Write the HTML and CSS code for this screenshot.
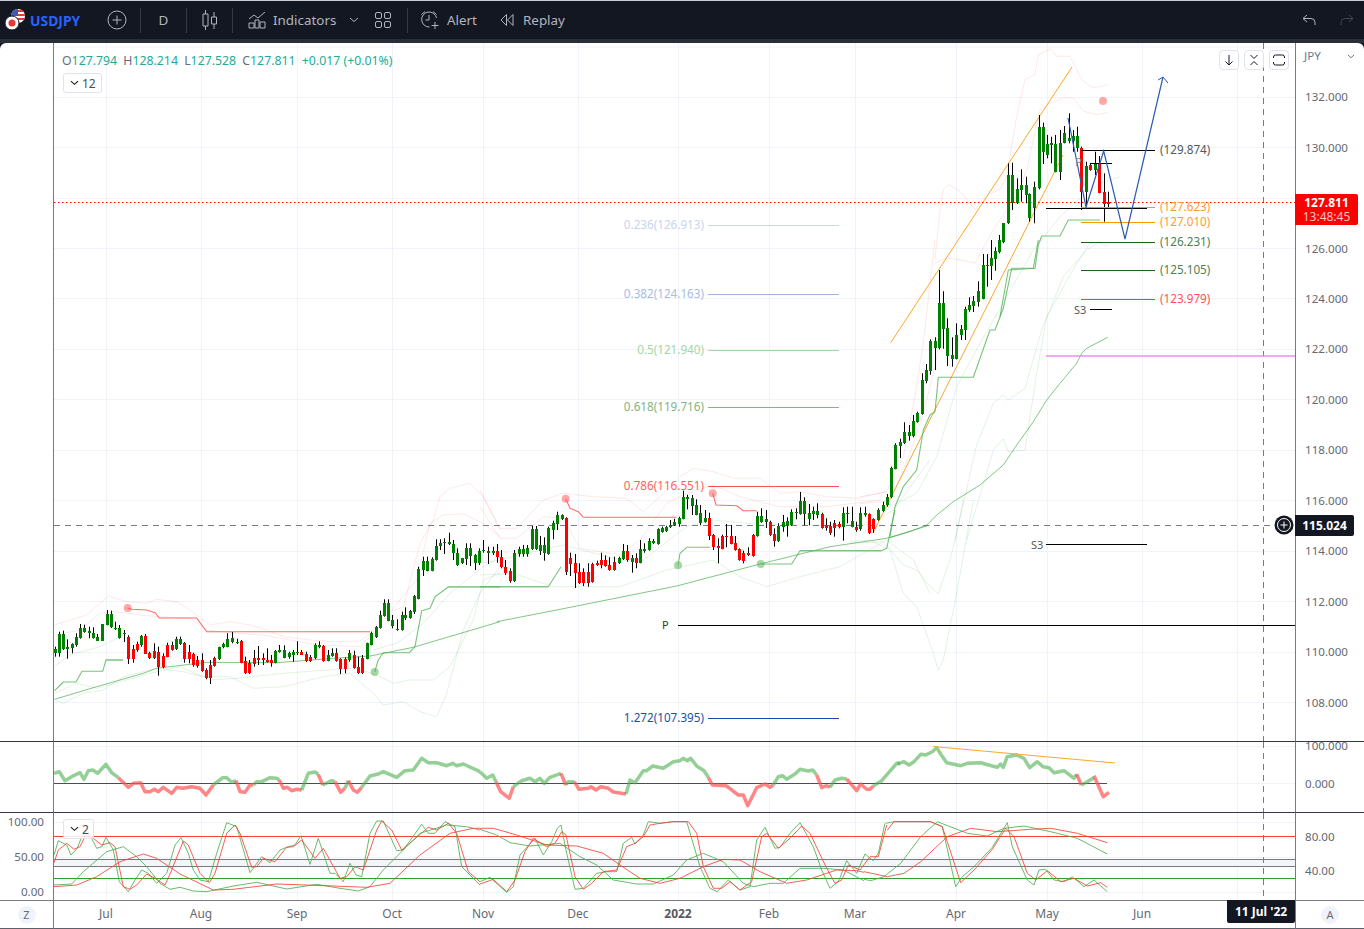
FILE: index.html
```html
<!DOCTYPE html>
<html lang="en">
<head>
<meta charset="utf-8">
<title>USDJPY</title>
<link rel="stylesheet" href="styles.css">
</head>
<body>
<div class="app">
  <header class="topbar">
    <svg class="logo" viewBox="0 0 22 22">
      <defs><clipPath id="usclip"><circle cx="14" cy="7" r="7"/></clipPath></defs>
      <g clip-path="url(#usclip)">
        <rect x="7" y="0" width="14" height="14" fill="#fff"/>
        <rect x="7" y="1" width="14" height="2" fill="#e53935"/>
        <rect x="7" y="5" width="14" height="2" fill="#e53935"/>
        <rect x="7" y="9" width="14" height="2" fill="#e53935"/>
        <rect x="7" y="0" width="7" height="7" fill="#3b5bb5"/>
      </g>
      <circle cx="8" cy="14" r="7" fill="#fff" stroke="#131722"/>
      <circle cx="8" cy="14" r="3.5" fill="#e53935"/>
    </svg>
    <span class="symbol">USDJPY</span>
    <svg class="ic ic-plus" viewBox="0 0 20 20"><circle cx="10" cy="10" r="9" fill="none"/><path d="M10 5.5v9M5.5 10h9"/></svg>
    <i class="sep sep-a"></i>
    <span class="tf">D</span>
    <i class="sep"></i>
    <span class="tf tf-icon"><svg class="ic-candle" viewBox="0 0 16 20"><path d="M3.500 0v4M3.500 16v4M1 4h5v12H1zM12 2v5M12 14v5M9.500 7h5v7h-5z" fill="none"/></svg></span>
    <i class="sep"></i>
    <svg class="ic ic-ind" viewBox="0 0 18 18"><path d="M1 17v-5h5v5zM7 17v-8h4v8zM12 17v-6h5v6zM1 8l5-4 4 3 7-6" fill="none"/></svg>
    <span class="txt txt-ind">Indicators</span>
    <svg class="ic ic-chev" viewBox="0 0 10 6"><path d="M1 1l4 3.500L9 1" fill="none"/></svg>
    <svg class="ic ic-grid" viewBox="0 0 16 16"><rect x=".5" y=".5" width="6" height="6" rx="1.500" fill="none"/><rect x="9.500" y=".5" width="6" height="6" rx="1.500" fill="none"/><rect x=".5" y="9.500" width="6" height="6" rx="1.500" fill="none"/><rect x="9.500" y="9.500" width="6" height="6" rx="1.500" fill="none"/></svg>
    <i class="sep sep-b"></i>
    <svg class="ic ic-alert" viewBox="0 0 20 20"><path d="M16.500 8a7.500 7.500 0 1 0-7 9M1.500 4.500L5 1.500M13 1.500l3.500 3M9 5v5H5.500M15 12v7M11.500 15.500h7" fill="none"/></svg>
    <span class="txt txt-alert">Alert</span>
    <svg class="ic ic-replay" viewBox="0 0 14 14"><path d="M6.500 1.500v11L1 7zM13 1.500v11L7.500 7z" fill="none"/></svg>
    <span class="txt txt-replay">Replay</span>
    <svg class="ic ic-undo" viewBox="0 0 14 12"><path d="M5 1L1 4.500 5 8M1 4.500h8a4 4 0 0 1 4 4V11" fill="none"/></svg>
    <svg class="ic ic-redo" viewBox="0 0 14 12"><path d="M9 1l4 3.500L9 8M13 4.500H5a4 4 0 0 0-4 4V11" fill="none"/></svg>
  </header>

  <main class="chart">
    <div class="side cell-main"></div>
    <div class="pane cell-main">
      <svg class="plot" id="svg-main" viewBox="54 43 1241 698" width="1241" height="698">
        <g id="main-grid"></g>
        <g id="main-bands"></g>
        <g id="main-lines"></g>
        <g id="main-candles"></g>
        <g id="main-top"></g>
        <g class="lbl">
          <text x="704" y="229" text-anchor="end" fill="#c9d4ee">0.236(126.913)</text>
          <text x="704" y="298" text-anchor="end" fill="#a9bde2">0.382(124.163)</text>
          <text x="704" y="354" text-anchor="end" fill="#a5d6a7">0.5(121.940)</text>
          <text x="704" y="411" text-anchor="end" fill="#7fb583">0.618(119.716)</text>
          <text x="704" y="490" text-anchor="end" fill="#ff5f5f">0.786(116.551)</text>
          <text x="704" y="722" text-anchor="end" fill="#1e4fa3">1.272(107.395)</text>
          <text x="1160" y="154" fill="#555861">(129.874)</text>
          <text x="1160" y="211" fill="#ff9a2e">(127.623)</text>
          <text x="1160" y="226" fill="#ff9a2e">(127.010)</text>
          <text x="1160" y="246" fill="#4f7f52">(126.231)</text>
          <text x="1160" y="274" fill="#4f7f52">(125.105)</text>
          <text x="1160" y="303" fill="#ff5252">(123.979)</text>
          <text x="1074" y="314" fill="#555861" class="sm">S3</text>
          <text x="1031" y="549" fill="#555861" class="sm">S3</text>
          <text x="662" y="629" fill="#333" class="sm">P</text>
          <text x="1075" y="166" fill="#8a8d96" class="sm">P</text>
        </g>
        <circle cx="1284" cy="525" r="9.500" fill="#131722"/>
        <circle cx="1284" cy="525" r="6.500" fill="none" stroke="#fff"/>
        <path d="M1284 521.500v7M1280.500 525h7" stroke="#fff" fill="none"/>
      </svg>
      <div class="legend">
        <span class="k">O</span><b>127.794</b>
        <span class="k gap">H</span><b>128.214</b>
        <span class="k gap">L</span><b>127.528</b>
        <span class="k gap">C</span><b>127.811</b>
        <b class="gap">+0.017</b> <b>(+0.01%)</b>
      </div>
      <button class="collapse c-main"><svg viewBox="0 0 10 6"><path d="M1 1l4 3.500L9 1" fill="none"/></svg>12</button>
      <div class="tools">
        <span class="tool"><svg viewBox="0 0 12 12"><path d="M6 1v10M2.500 7.500L6 11l3.500-3.500" fill="none"/></svg></span>
        <span class="tool"><svg viewBox="0 0 12 12"><path d="M2.500 1L6 4.500 9.500 1M2.500 11L6 7.500 9.500 11" fill="none"/></svg></span>
        <span class="tool"><svg viewBox="0 0 12 12"><path d="M.5 4V3a2 2 0 0 1 2-2h7a2 2 0 0 1 2 2v1M.5 8v1a2 2 0 0 0 2 2h7a2 2 0 0 0 2-2V8" fill="none"/></svg></span>
      </div>
    </div>
    <div class="axis cell-main">
      <div class="axis-head"><span>JPY</span><svg viewBox="0 0 10 6"><path d="M1 1l4 3.500L9 1" fill="none"/></svg></div>
      <span class="tick">132.000</span><span class="tick">130.000</span><span class="tick">128.000</span>
      <span class="tick">126.000</span><span class="tick">124.000</span><span class="tick">122.000</span>
      <span class="tick">120.000</span><span class="tick">118.000</span><span class="tick">116.000</span>
      <span class="tick">114.000</span><span class="tick">112.000</span><span class="tick">110.000</span>
      <span class="tick">108.000</span>
      <div class="tag tag-last"><b>127.811</b><span>13:48:45</span></div>
      <div class="tag tag-cross"><b>115.024</b></div>
    </div>

    <div class="side cell-rsi"></div>
    <div class="pane cell-rsi">
      <svg class="plot" viewBox="54 742 1241 70" width="1241" height="70">
        <g id="rsi-grid"></g><g id="rsi-lines"></g>
      </svg>
    </div>
    <div class="axis cell-rsi axis-rsi">
      <span class="tick-rsi">100.000</span><span class="tick-rsi">0.000</span>
    </div>

    <div class="side cell-sto side-sto">
      <span>100.00</span><span>50.00</span><span>0.00</span>
    </div>
    <div class="pane cell-sto">
      <svg class="plot" viewBox="54 813 1241 87" width="1241" height="87">
        <g id="sto-grid"></g><g id="sto-lines"></g>
      </svg>
      <button class="collapse c-sto"><svg viewBox="0 0 10 6"><path d="M1 1l4 3.500L9 1" fill="none"/></svg>2</button>
    </div>
    <div class="axis cell-sto axis-sto">
      <span class="tick-sto">80.00</span><span class="tick-sto">40.00</span>
    </div>

    <div class="side cell-time corner"><span class="round">Z</span></div>
    <div class="pane cell-time">
      <svg class="plot" viewBox="54 901 1241 27" width="1241" height="27">
        <g class="timelbl" text-anchor="middle">
          <text x="106" y="918">Jul</text><text x="201" y="918">Aug</text><text x="297" y="918">Sep</text>
          <text x="392" y="918">Oct</text><text x="483" y="918">Nov</text><text x="578" y="918">Dec</text>
          <text x="678" y="918" class="bold">2022</text><text x="769" y="918">Feb</text><text x="855" y="918">Mar</text>
          <text x="956" y="918">Apr</text><text x="1047" y="918">May</text><text x="1142" y="918">Jun</text>
        </g>
      </svg>
      <div class="tag tag-date"><b>11 Jul '22</b></div>
    </div>
    <div class="axis cell-time corner"><span class="round">A</span></div>
  </main>
</div>
<script src="chart.js"></script>
</body>
</html>
```
FILE: styles.css
```css
* { box-sizing: border-box; }
html, body { margin: 0; padding: 0; background: #131722; }
body { width: 1364px; height: 929px; overflow: hidden; font-family: "Noto Sans", "Liberation Sans", sans-serif; }
.app { width: 1364px; height: 929px; display: flex; flex-direction: column; }

.topbar { height: 43px; flex: none; display: flex; align-items: center; background: #131722; border-top: 1px solid #c9cbd1; border-bottom: 4px solid #2a2e39; color: #b2b5be; font-size: 13.4px; }
.logo { width: 22px; height: 22px; margin-left: 4px; flex: none; }
.symbol { width: 50px; margin-left: 4px; color: #2962ff; font-weight: 700; font-size: 13.9px; white-space: nowrap; }
.ic { flex: none; stroke: #b2b5be; stroke-width: 1; }
.ic-plus { width: 20px; height: 20px; margin-left: 27px; fill: none; }
.sep { width: 1px; height: 25px; background: #363a45; flex: none; }
.sep-a { margin-left: 13px; }
.tf { width: 45px; text-align: center; flex: none; }
.tf-icon { display: flex; justify-content: center; }
.ic-candle { width: 16px; height: 20px; stroke: #b2b5be; stroke-width: 1; }
.ic-ind { width: 18px; height: 18px; margin-left: 15px; }
.txt { flex: none; white-space: nowrap; }
.txt-ind { width: 62px; margin-left: 7px; }
.ic-chev { width: 10px; height: 6px; margin-left: 14px; }
.ic-grid { width: 16px; height: 16px; margin-left: 16px; }
.sep-b { margin-left: 16px; }
.ic-alert { width: 20px; height: 20px; margin-left: 12px; }
.txt-alert { width: 31px; margin-left: 7px; }
.ic-replay { width: 14px; height: 14px; margin-left: 22px; }
.txt-replay { width: 42px; margin-left: 9px; }
.ic-undo { width: 14px; height: 12px; margin-left: auto; }
.ic-redo { width: 14px; height: 12px; margin-left: 24px; margin-right: 10px; stroke: #434651; }

.chart { flex: 1; display: grid; grid-template-columns: 54px 1241px 69px; grid-template-rows: 699px 71px 88px 28px; background: #fff; border-radius: 6px 6px 0 0; overflow: hidden; }
.cell-main, .cell-rsi, .cell-sto, .cell-time { border-bottom: 1px solid #363a45; }
.cell-time { border-bottom-color: #5d606b; }
.cell-sto { border-bottom-color: #787b86; }
.side { border-right: 1px solid #787b86; }
.pane { position: relative; }
.plot { display: block; }
.axis { position: relative; border-left: 1px solid #787b86; display: flex; flex-direction: column; align-items: flex-start; color: #666973; font-size: 11.6px; }

.legend { position: absolute; left: 8px; top: 10px; font-size: 12.3px; color: #22ab94; white-space: nowrap; line-height: 16px; }
.legend b { font-weight: 400; }
.legend .k { color: #6a6d78; }
.legend .gap { margin-left: 3px; }

.collapse { position: absolute; display: flex; align-items: center; gap: 3px; padding: 0 0 0 6px; height: 20px; background: rgba(255,255,255,.85); border: 1px solid #e0e3eb; border-radius: 3px; font: 12px "Noto Sans", "Liberation Sans", sans-serif; color: #4a4d57; }
.collapse svg { width: 9px; height: 6px; stroke: #131722; stroke-width: 1.2; }
.c-main { left: 9px; top: 30px; width: 39px; }
.c-sto { left: 9px; top: 6px; width: 31px; }

.tools { position: absolute; left: 1165px; top: 7px; display: flex; gap: 5px; }
.tool { width: 20px; height: 20px; display: flex; align-items: center; justify-content: center; background: #fff; border: 1px solid #e0e3eb; border-radius: 4px; }
.tool svg { width: 12px; height: 12px; stroke: #131722; stroke-width: 1; }

.axis-head { width: 100%; height: 29.3px; flex: none; display: flex; justify-content: space-between; align-items: flex-start; padding: 5px 9px 0 8px; line-height: 16px; }
.axis-head span { color: #6a7896; }
.axis-head svg { width: 8px; height: 5px; margin-top: 6px; stroke: #555; stroke-width: 1; }
.tick { height: 50.45px; line-height: 50.45px; flex: none; padding-left: 9px; }

.tag { position: absolute; background: #131722; color: #fff; font-size: 12px; display: flex; flex-direction: column; align-items: center; justify-content: center; line-height: 14px; }
.tag b { font-weight: 700; }
.tag-last { left: -1px; top: 151px; width: 63px; height: 31px; background: #ff0000; border-radius: 0 2px 2px 0; }
.tag-last span { color: #ffc4c4; }
.tag-cross { left: -1px; top: 472px; width: 59px; height: 21px; border-radius: 0 2px 2px 0; }
.tag-date { left: 1173px; top: -1px; width: 68px; height: 23px; border-radius: 0 0 2px 2px; }

.axis-rsi { justify-content: flex-start; }
.tick-rsi { height: 38px; line-height: 38px; flex: none; padding-left: 9px; }
.tick-rsi:first-child { margin-top: -15px; }
.axis-sto { padding-top: 7px; }
.tick-sto { height: 34px; line-height: 34px; flex: none; padding-left: 9px; }

.side-sto { display: flex; flex-direction: column; align-items: flex-end; padding-right: 9px; font-size: 11.6px; color: #666973; }
.side-sto span { height: 35px; line-height: 35px; flex: none; }
.side-sto span:first-child { margin-top: -9.5px; }

.corner { display: flex; align-items: center; justify-content: center; flex-direction: row; }
.round { width: 18px; height: 18px; border-radius: 50%; background: #f0f3fa; color: #6a6d78; font-size: 11px; display: flex; align-items: center; justify-content: center; }

.lbl { font-size: 11.7px; }
.lbl .sm { font-size: 11px; }
.timelbl { font-size: 12px; fill: #666973; }
.timelbl .bold { font-weight: 700; fill: #555861; }
```
FILE: chart.js
```js
// Pixel-space series traced from the chart. Each series carries its own origin and a 3x scale.
function pts(x0, y0, s) {
  return s.trim().split(/\s+/).map(function (p) {
    var a = p.split(',');
    return (x0 + a[0] / 3).toFixed(1) + ',' + (y0 + a[1] / 3).toFixed(1);
  }).join(' ');
}
function line(x0, y0, s, stroke, w, op) {
  return '<polyline fill="none" stroke-linejoin="round" stroke="' + stroke + '" stroke-width="' + (w || 1) + '"' +
    (op ? ' stroke-opacity="' + op + '"' : '') + ' points="' + pts(x0, y0, s) + '"/>';
}
function seg(x1, y1, x2, y2, c, w, extra) {
  return '<line x1="' + x1 + '" y1="' + y1 + '" x2="' + x2 + '" y2="' + y2 + '" stroke="' + c + '" stroke-width="' + (w || 1) + '" ' + (extra || '') + '/>';
}
function put(id, html) { document.getElementById(id).innerHTML = html; }

var VX = [106, 201, 297, 392, 483, 578, 678, 769, 855, 956, 1047, 1142, 1237];
var GRID = '#f0f3fa', DASH = 'stroke-dasharray="6 5"', CROSS = '#787b86';
function grid(ys, top, bot) {
  var h = '';
  ys.forEach(function (y) { h += seg(54, y, 1295, y, GRID); });
  VX.forEach(function (x) { h += seg(x + .5, top, x + .5, bot, GRID); });
  return h;
}

/* ---------- main pane ---------- */
var ys = [46.5, 97, 147, 198, 248, 298, 349, 399, 450, 500, 551, 601, 652, 702].map(function (y) { return y + .5; });
put('main-grid', grid(ys, 43, 741));

var PINK = '#ff5252', GR = '#4caf50';
var bands = '';
[
  [50, 480, '14,435 60,420 110,405 175,348 230,365 290,370 320,358 380,365 420,390 480,435 540,425 600,435 650,450 700,470 780,480 850,485 930,483 960,460 1000,405 1060,380 1110,190 1150,120 1170,50 1200,25 1260,10 1300,50 1350,150'],
  [50, 480, '14,465 90,450 150,400 190,395 320,410 420,415 470,450 560,460 640,465 720,480 800,495 930,500 965,465 1000,420 1100,300 1140,130 1180,105 1240,102 1300,130 1350,170'],
  [480, 460, '0,90 60,205 110,205 190,120 250,100 340,110 440,115 490,155 540,110 600,50 640,25 700,35 760,55 840,55 900,100 960,95 1040,110 1130,115 1220,95'],
  [480, 460, '0,140 60,235 110,235 190,170 250,175 300,265 420,285 480,240 560,130 620,100 700,75 780,110 900,140 1040,140 1200,120'],
  [860, 240, '0,770 80,755 130,650 170,440 190,310 225,0'],
  [860, 240, '0,790 80,785 100,760 150,640 190,520 225,380 235,320'],
  [860, 43, '225,650 240,500 250,440 265,425 300,445 345,500 380,455 420,440 440,400 470,220 495,110 525,95 535,35 570,18 590,40 630,40 665,110 700,135 745,125'],
  [860, 43, '225,660 260,645 300,650 345,660 400,560 470,460 500,380 540,200 570,180 610,165 640,165 670,205 710,215 745,208']
].forEach(function (b) { bands += line(b[0], b[1], b[2], PINK, 1, .14); });
[
  [50, 480, '14,558 60,525 150,500 220,465'],
  [50, 480, '14,660 40,670 100,640 160,630 220,590 320,565 400,575 460,590 540,590 610,625 700,620 820,590 900,580 970,640 1000,675 1060,665 1110,695 1160,710 1190,640 1240,450 1290,340 1350,260'],
  [50, 480, '14,640 80,610 140,625 300,580 390,560 480,600 560,595 700,580 900,565 970,580 1030,610 1080,600 1150,600 1200,560 1270,420 1300,300 1350,280'],
  [50, 480, '970,510 1040,490 1120,430 1200,340 1300,260 1350,230'],
  [480, 460, '0,310 60,300 200,265 250,255 420,300 490,300 540,260 620,200 700,180 800,190 920,195 1040,195 1160,195 1240,150 1350,0'],
  [480, 460, '0,345 100,340 220,380 420,380 560,330 700,300 780,350 860,380 960,350 1080,320 1220,240 1300,300 1350,400'],
  [850, 500, '0,125 60,120 100,140 120,150 160,280 200,320 250,460 265,510 280,480 320,280 370,0'],
  [850, 500, '0,130 100,125 130,160 160,195 200,210 245,265 265,280 300,180 320,100 340,0'],
  [860, 240, '285,900 350,615 400,490 430,465 445,480 495,445 545,270 610,110 680,30 715,8 745,18'],
  [860, 240, '320,900 400,630 430,597 445,635 495,630 530,400 560,230 650,70 690,10 720,5'],
  [860, 240, '10,880 90,800 170,760 230,650 290,440 360,310 440,170 520,30 600,-70 655,-120 720,-170 780,-190']
].forEach(function (b) { bands += line(b[0], b[1], b[2], GR, 1, .16); });
put('main-bands', bands);

var ml = '';
// rising channel
ml += seg(890.7, 342.7, 1072, 67, '#ffa726', 1);
ml += seg(873, 533, 1063, 155, '#ffa726', 1);
// moving average
[
  [50, 480, '14,658 140,620 280,580 320,565 470,547 680,548 850,535 960,528 1090,502 1350,425'],
  [480, 460, '50,485 230,450 590,378 840,312 1050,260 1220,235 1350,195'],
  [860, 240, '90,893 150,875 200,855 230,825 280,785 360,735 430,675 460,630 520,545 560,480 600,430 650,370 665,340 680,325 743,292']
].forEach(function (b) { ml += line(b[0], b[1], b[2], '#4caf50', 1, .7); });
// stepped stops
[
  [50, 480, '14,632 40,606 78,606 96,574 158,574 168,540 220,540'],
  [50, 480, '974,576 985,540 1000,518 1078,518 1095,500 1115,392 1140,385 1155,350 1195,321 1350,321'],
  [480, 460, '0,380 205,380 243,320'],
  [480, 460, '594,316 600,280 620,262 690,262'],
  [480, 460, '842,312 935,312 960,272 1205,272 1220,265 1245,150'],
  [860, 240, '90,890 105,800 130,740 170,690 190,570 210,525 225,515 235,412 340,412 390,270 405,270 430,205 455,85 520,85 535,0'],
  [1000, 0, '0,950 25,810 105,805 115,735 125,708 180,708 205,660 300,660']
].forEach(function (b) { ml += line(b[0], b[1], b[2], '#4caf50', 1.1, .75); });
ml += seg(448, 586.7, 548, 586.7, '#4caf50', 1.6, 'stroke-opacity=".35"');
ml += seg(800, 550.7, 881, 550.7, '#4caf50', 1.6, 'stroke-opacity=".35"');
ml += seg(106, 660, 123, 660, '#4caf50', 1.6, 'stroke-opacity=".35"');
[
  [50, 480, '233,384 245,388 290,390 315,398 328,414 440,414 470,455 960,455'],
  [480, 460, '257,116 270,145 295,155 310,172 590,172'],
  [480, 460, '698,100 708,135 770,137 790,152 830,152']
].forEach(function (b) { ml += line(b[0], b[1], b[2], '#ff5252', 1.1, .85); });
[[127.7, 608, 1], [565.7, 498.7, 1], [712.7, 493.3, 1], [1103, 101, 1]].forEach(function (c) {
  ml += '<circle cx="' + c[0] + '" cy="' + c[1] + '" r="4" fill="#ff5252" fill-opacity=".5"/>';
});
[[374.7, 672, 1], [678, 565.3, 1], [760.7, 564, 1]].forEach(function (c) {
  ml += '<circle cx="' + c[0] + '" cy="' + c[1] + '" r="4" fill="#4caf50" fill-opacity=".5"/>';
});
// fibonacci levels
[[225, '#c9d4ee'], [294, '#9db5e0'], [350, '#a5d6a7'], [407, '#81b785'], [486, '#ff5252'], [718, '#1848a8']].forEach(function (f) {
  ml += seg(708, f[0] + .5, 839, f[0] + .5, f[1]);
});
// crosshair and last price
ml += seg(54, 525.5, 1295, 525.5, CROSS, 1, DASH);
ml += seg(1263.5, 43, 1263.5, 741, CROSS, 1, DASH);
ml += seg(54, 202.5, 1295, 202.5, '#ff0000', 1, 'stroke-dasharray="1.5 2.500"');
put('main-lines', ml);

// candles: colour + x, body top, body bottom, wick top, wick bottom, all at 3x from an origin
var sets = [
  [50, 480, 'g14,508,518,500,530 g26,462,520,455,530 g40,462,508,452,510 g52,500,506,478,536 g65,492,505,490,520 g79,472,496,460,500 g91,445,474,432,476 g103,445,455,434,458 g118,454,458,440,475 g130,460,474,442,476 g142,472,482,462,483 g157,432,482,432,483 g170,402,436,390,436 g182,402,442,392,444 g196,444,446,425,450 g208,444,474,435,476 g221,458,460,450,486 r235,472,538,466,552 r248,508,538,495,548 r260,492,510,485,515 g274,468,495,465,500 r286,468,522,462,522 r298,520,534,515,537 r313,514,534,490,537 r325,516,562,500,587 r338,528,562,520,565 r352,496,530,488,532 r365,496,510,485,512 g377,476,508,470,510 g390,478,492,470,495 r403,488,538,486,548 r416,516,536,495,550 r430,522,556,518,560 r442,540,558,528,563 r455,540,574,520,575 r469,570,595,565,598 r481,556,594,540,612 r493,534,558,530,560 g508,502,538,500,540 g520,492,500,488,505 g532,476,500,460,502 g547,474,486,456,490 g560,486,488,476,492 r572,483,548,480,550 r585,544,580,530,582 r598,548,580,540,582 r611,534,552,510,560 r625,534,540,498,555 r638,534,540,520,555 r650,540,546,505,548 r664,540,548,525,560 g676,514,548,510,550 g688,510,516,495,518 g703,510,534,496,535 g716,520,532,515,536 g728,516,524,510,545 g742,516,519,484,525 r754,516,524,510,525 r767,522,544,515,546 r781,532,544,525,546 g794,494,534,490,538 g806,494,500,484,505 r820,498,542,495,545 g833,526,542,510,544 g845,518,528,505,530 r858,520,542,505,545 r871,538,566,535,582 r884,538,566,532,580 g898,520,540,510,545 r911,526,564,512,566 r923,562,578,530,582 r937,534,580,525,582 g950,490,536,488,538 g962,460,494,455,496 g977,440,472,438,474 g989,404,444,392,446 g1001,370,408,358,410 g1015,370,422,358,424 g1027,420,438,405,445 g1040,446,450,418,452 g1055,406,450,395,452 g1066,404,414,382,420 g1079,392,414,390,416 g1093,348,396,345,402 g1105,268,356,260,358 g1118,243,270,230,288 g1132,243,272,230,274 g1145,236,272,232,274 g1157,198,240,178,242 g1171,190,198,178,210 g1183,186,190,175,222 g1196,186,192,158,195 g1210,192,218,180,240 g1222,218,256,205,258 g1235,234,250,234,252 g1249,204,236,190,255 g1261,204,228,190,258 g1276,225,248,222,270 g1288,213,248,205,255 g1300,209,214,180,218 g1315,213,218,200,252 g1328,213,218,200,225 r1340,213,232,192,248'],
  [480, 460, 'r64,291,320,270,325 r76,322,338,300,345 r89,332,362,325,368 g103,280,364,270,366 g116,266,282,260,290 g128,266,282,255,290 g142,264,282,255,290 g155,208,268,198,270 g167,208,268,198,270 g180,256,274,228,285 g193,255,280,232,302 g205,205,282,200,284 g219,188,210,182,238 g232,165,192,155,210 g245,165,176,163,180 r259,174,336,172,345 r271,295,312,278,348 r284,310,338,282,384 r297,336,370,310,372 r310,336,370,325,378 r323,336,370,310,380 r337,312,366,308,368 r350,310,316,302,318 r362,300,314,278,325 r376,300,318,286,320 r388,315,330,292,332 r401,306,330,290,332 g416,293,310,290,312 g428,272,298,252,300 r441,272,300,255,305 g455,294,307,285,338 r467,294,308,280,325 g479,266,308,240,310 g493,266,272,250,278 g506,243,270,235,272 g519,243,250,237,252 g533,206,252,205,254 g545,204,216,200,218 g557,202,214,197,216 g571,196,202,180,204 g583,186,196,176,198 g596,174,192,170,200 g610,110,176,92,178 g622,110,116,104,148 g635,114,138,105,165 g648,134,164,118,166 g661,160,188,135,196 g674,174,187,150,188 r688,174,228,158,240 r700,225,262,222,270 r713,258,264,235,310 r726,228,266,224,268 r739,228,231,192,262 r752,228,252,195,253 r765,250,270,228,272 r778,268,300,265,302 r790,280,302,272,310 r805,280,286,262,288 r818,225,288,222,290 g830,168,228,155,230 g844,168,186,145,188 g857,178,186,150,204 r869,186,225,182,228 r883,222,242,205,260 g895,198,244,190,246 g908,186,200,165,215 g921,182,198,172,230 g933,156,196,148,198 g947,156,160,145,178 g960,124,162,96,164 g973,124,162,112,196 g986,160,176,132,196 g999,153,163,140,180 g1012,153,164,130,175 r1025,162,204,158,206 r1038,196,204,175,212 r1051,198,218,185,225 r1063,190,204,180,230 r1077,192,200,185,205 g1090,158,202,142,242 g1102,158,161,140,190 g1116,184,200,140,202 r1128,200,210,185,215 g1141,160,208,142,212 g1154,158,166,140,170 r1167,162,218,160,222 r1180,178,206,175,218 g1195,150,180,145,182 g1208,136,152,125,155 g1220,110,136,102,140 g1233,24,112,20,115'],
  [860, 240, 'g106,615,686,610,688 g119,606,618,596,654 g132,576,610,547,612 g146,576,588,555,602 g158,544,588,525,592 g172,518,546,515,548 g185,420,522,400,524 g197,390,424,372,430 g211,304,392,298,404 g224,304,324,292,390 g236,190,324,90,328 g250,190,266,154,326 g262,265,348,235,378 g275,345,356,292,380 g289,286,356,250,358 g302,268,285,255,300 g314,208,270,200,300 g328,195,210,172,215 g340,182,198,168,216 g353,154,185,124,200 g368,75,177,42,178 g380,74,76,42,140 g392,54,78,0,120 g406,34,56,22,92'],
  [1000, 0, 'g-3,720,756,705,760 g10,670,725,670,730 g24,525,670,490,672 g37,525,610,488,630 g50,568,610,535,612 g64,555,570,508,605 g77,555,585,530,610 g88,582,655,580,665 g103,560,625,545,670 g116,382,565,345,568 g128,382,455,368,492 g142,432,465,405,475 g154,430,435,410,490 g166,432,515,405,517 g180,428,515,390,540 g193,400,428,378,430 g206,415,422,340,430 g219,408,422,390,455 g232,408,445,380,455 r244,445,575,440,630 g258,498,575,485,620 r271,496,510,490,512 g284,490,510,455,525 r298,490,578,468,580 r311,576,612,520,665 r323,606,612,575,625']
];
var wick = '', body = { g: '', r: '' };
sets.forEach(function (s) {
  s[2].split(' ').forEach(function (c) {
    var col = c[0], a = c.slice(1).split(',').map(Number);
    var x = Math.round(s[0] + a[0] / 3), bt = s[1] + a[1] / 3, bb = s[1] + a[2] / 3, wt = s[1] + a[3] / 3, wb = s[1] + a[4] / 3;
    wick += 'M' + (x + .5) + ' ' + wt.toFixed(1) + 'V' + wb.toFixed(1);
    body[col] += 'M' + (x - 1) + ' ' + Math.round(bt) + 'h3V' + Math.max(Math.round(bb), Math.round(bt) + 1) + 'h-3z';
  });
});
put('main-candles',
  '<path d="' + wick + '" stroke="#000" stroke-width="1" fill="none"/>' +
  '<path d="' + body.g + '" fill="#008000"/><path d="' + body.r + '" fill="#ff0000"/>');

var top_ = '';
top_ += seg(1081, 150.5, 1155, 150.5, '#000');
top_ += seg(1090, 163.5, 1112, 163.5, '#000');
top_ += seg(1046, 208.5, 1147, 208.5, '#000');
top_ += seg(1081, 207.5, 1155, 207.5, '#ff9800');
top_ += seg(1081, 222.5, 1155, 222.5, '#ff9800');
top_ += seg(1081, 242.5, 1155, 242.5, '#1b5e20');
top_ += seg(1081, 270.5, 1155, 270.5, '#1b5e20');
top_ += seg(1081, 299.5, 1155, 299.5, '#f44336');
top_ += seg(1090, 309.5, 1112, 309.5, '#000');
top_ += seg(1046, 544.5, 1147, 544.5, '#000');
top_ += seg(678, 625.5, 1295, 625.5, '#000');
top_ += seg(1046, 356, 1295, 356, '#e78ff0', 1.6);
top_ += '<polyline fill="none" stroke="#2a5cb0" stroke-width="1.2" points="1068,118 1086,207 1103.7,151 1125,239 1163,77"/>';
top_ += '<polyline fill="none" stroke="#2a5cb0" stroke-width="1" points="1158,80 1163,77 1168,83"/>';
put('main-top', top_);

/* ---------- oscillator pane ---------- */
put('rsi-grid', grid([746.5, 783.5], 742, 812) + seg(54, 783.5, 1107, 783.5, '#4a4d57', 1) +
  seg(1263.5, 742, 1263.5, 812, CROSS, 1, DASH));
var G3 = '#4caf50', R3 = '#ff5252', rsi = '';
function thick(x0, y0, list) {
  list.forEach(function (l) {
    rsi += line(x0, y0, l.slice(1), l[0] === 'g' ? G3 : R3, 3.5, l[0] === 'g' ? .6 : .7);
  });
}
thick(0, 730, [
  'g162,130 178,125 195,152 215,140 240,128 252,148 265,122 278,120 293,130 318,103 335,128 355,143',
  'r355,143 385,172 400,160 422,158 435,185 450,185 463,178 475,185 490,172 515,190 530,172 548,175 575,170 600,175 618,195 640,165',
  'g640,165 668,143 680,143 695,157 708,152',
  'r708,152 720,185 735,187 750,165 760,165',
  'g760,165 770,155 785,155 810,143 830,145 838,150',
  'r838,150 850,175 862,172 875,182 890,178 905,180',
  'g905,180 925,130 945,126 955,133',
  'r955,133 968,165',
  'g968,165 995,152 1005,155',
  'r1005,155 1022,187 1035,175',
  'g1035,175 1045,152',
  'r1045,152 1060,180 1072,187 1085,172',
  'g1085,172 1110,138 1135,132 1150,125 1190,142 1215,122 1240,120 1265,85 1285,98 1310,98 1340,107 1358,100 1370,107 1390,102 1440,125'
]);
thick(480, 740, [
  'g0,95 20,115 38,105 48,125',
  'r48,125 62,155 88,175 100,140',
  'g100,140 125,122 150,115 165,125 180,115 193,130 210,112 243,100',
  'r243,100 257,135',
  'g257,135 265,125 283,125',
  'r283,125 297,148 325,145 333,140 348,150 362,140 385,145 400,156 438,162',
  'g438,162 450,120 465,128 490,92 500,92 518,78 550,85 580,65 600,62 610,55 622,62 632,55 650,78 672,92 685,112',
  'r685,112 697,135 738,137 775,165 790,165 803,197 830,143 855,132 870,142 880,135',
  'g880,135 895,110 908,107 920,118 945,102 960,88 985,93 998,90 1010,105',
  'r1010,105 1025,143 1040,137 1050,142',
  'g1050,142 1065,120 1085,115 1100,117',
  'r1100,117 1130,152 1142,132 1160,148 1170,148 1180,138',
  'g1180,138 1205,122 1250,70 1260,72'
]);
thick(864, 730, [
  'g100,100 105,100 120,95 135,105 150,95 170,73 185,75 205,65 218,53 232,75 248,98 290,107 310,100 350,98 385,108 400,112 410,102 418,112 430,80 458,75 480,85 497,113 520,95 537,110 555,113 570,128 600,122 630,145 638,133',
  'r638,133 652,165',
  'g652,165 670,155 690,143',
  'r690,137 718,200 735,187'
]);
rsi += seg(933, 746.5, 1115, 763, '#ffa726', 1);
put('rsi-lines', rsi);

/* ---------- stochastic pane ---------- */
put('sto-grid', grid([822.5, 857.5, 892.5], 813, 900) +
  '<rect x="54" y="859" width="1241" height="7" fill="#f4f5f7"/>' +
  seg(54, 859.5, 1295, 859.5, '#777a85') + seg(54, 866.5, 1295, 866.5, '#777a85') +
  seg(54, 836.5, 1295, 836.5, '#f44336') + seg(54, 878.5, 1295, 878.5, '#2e9e35') +
  seg(1263.5, 813, 1263.5, 897, CROSS, 1, DASH));
var GS = '#4caf50', RS = '#f44336', sto = '';
[
  [0, 730, GS, '162,375 175,332 200,345 213,375 232,355 245,320 262,300 290,355 305,350 318,322 340,360 358,455 385,485 405,450 425,420 445,430 470,460 500,430 525,345 543,323 565,370 580,420 600,450 625,455 650,370 680,278 710,290 750,428 785,380 810,398 840,360 860,352 885,345 903,317 930,403 955,325 990,430 1005,430 1030,455 1050,400 1068,435 1085,440 1110,310 1130,273 1150,273 1190,362 1210,360 1265,283 1285,310 1305,310 1335,275 1365,290 1385,410 1440,465'],
  [0, 730, RS, '162,398 175,360 200,340 222,358 240,350 260,310 280,325 305,345 330,338 345,350 370,470 390,478 410,465 440,432 465,445 495,465 515,420 550,333 565,345 600,430 628,458 645,430 680,310 705,285 720,310 755,412 770,410 790,385 825,395 860,352 880,350 905,330 945,385 970,355 1020,445 1040,440 1065,410 1090,420 1130,300 1145,273 1175,300 1205,360 1235,335 1285,292 1310,300 1345,280 1370,310 1405,425 1440,455'],
  [0, 730, GS, '162,465 215,462 250,425 320,365 370,350 410,380 440,410 480,460 510,478 540,472 580,483 620,485 700,468 770,457 860,477 950,463 1020,475 1075,483 1110,470 1150,420 1195,375 1260,310 1340,285 1400,290 1440,300'],
  [0, 730, RS, '162,470 230,465 290,440 360,395 430,372 470,385 540,432 640,480 700,478 830,462 1000,468 1100,472 1170,460 1260,375 1350,310 1420,295 1440,295'],
  [480, 740, GS, '0,425 30,412 55,435 80,457 100,440 120,345 165,295 190,345 215,305 232,265 243,255 260,340 285,448 310,445 350,400 380,395 410,395 430,310 455,292 465,312 490,285 505,245 540,250 580,245 620,245 660,380 690,445 712,455 745,420 780,450 810,440 830,300 855,262 885,325 900,322 930,280 960,248 1000,320 1025,390 1050,445 1075,425 1100,362 1130,400 1155,342 1180,362 1195,340 1215,250'],
  [480, 740, RS, '0,432 40,418 80,455 105,420 135,335 160,295 200,320 225,310 245,275 258,285 285,410 310,448 335,430 370,395 410,390 440,320 465,310 490,290 510,255 540,250 580,245 625,245 650,280 670,380 700,445 725,445 750,425 780,450 815,425 845,290 860,280 895,325 930,295 965,258 990,280 1040,385 1065,430 1085,420 1105,375 1140,390 1170,350 1195,350 1220,255'],
  [480, 740, GS, '0,268 50,285 90,308 150,318 240,310 300,350 350,375 400,420 470,432 520,432 580,405 620,360 670,340 730,365 790,430 820,440 870,430 910,430 960,385 1030,385 1090,390 1152,422'],
  [480, 740, RS, '0,265 40,265 110,285 200,315 290,318 370,340 420,375 480,415 540,430 600,415 670,380 730,358 780,360 840,395 920,430 980,420 1070,390 1130,392 1152,397'],
  [864, 730, GS, '65,280 90,275 200,275 235,290 275,470 295,440 330,410 385,352 430,278 445,350 490,450 510,465 525,420 545,418 570,450 600,455 625,440 660,470 690,450 730,485'],
  [864, 730, RS, '70,300 90,275 200,275 235,290 290,458 330,420 385,358 425,295 450,320 490,430 515,450 550,422 590,455 630,445 670,468 710,458 730,472'],
  [864, 730, GS, '0,448 20,452 60,440 110,400 170,320 220,275 310,310 370,318 420,295 480,288 560,305 640,325 730,372'],
  [864, 730, RS, '0,425 70,440 120,430 170,395 250,320 320,295 400,305 500,298 560,295 640,310 730,338']
].forEach(function (l) { sto += line(l[0], l[1], l[3], l[2], 1, .85); });
put('sto-lines', sto);
```
